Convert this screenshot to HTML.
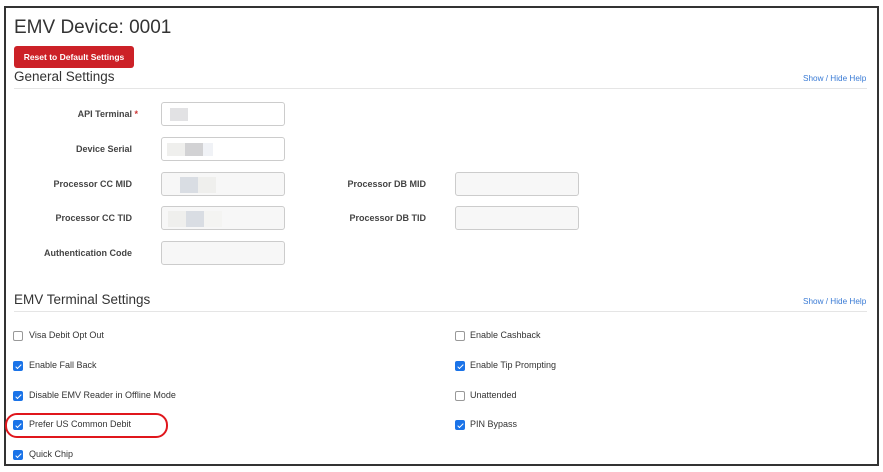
<!DOCTYPE html>
<html><head><style>
body{margin:0;width:883px;height:472px;background:#fff;font-family:"Liberation Sans",Arial,sans-serif;position:relative;overflow:hidden;color:#333}
.frame{position:absolute;left:4px;top:6px;width:871px;height:456px;border:2px solid #333;}
.a{position:absolute;white-space:nowrap}
h1{position:absolute;left:14px;top:17px;margin:0;font-weight:normal;font-size:19px;color:#333}
.btn{position:absolute;left:14px;top:46px;width:120px;height:22px;background:#cc2127;border-radius:3px;color:#fff;font-size:8.5px;font-weight:bold;text-align:center;line-height:22px}
.sec{font-size:13.5px;color:#333}
.hr{position:absolute;left:14px;width:853px;height:1px;background:#e5e5e5}
.help{font-size:8.2px;color:#3a7bd5}
.lbl{font-size:9px;font-weight:bold;color:#444;text-align:right;width:130px}
.inp{position:absolute;width:122px;height:22px;border:1px solid #ccc;border-radius:3px;background:#fff}
.ro{background:#f7f7f7}
.blk{position:absolute;height:13px}
.cb{position:absolute;width:8px;height:8px;border:1px solid #999;border-radius:2px;background:#fff}
.cb.on{background:#1a73e8;border-color:#1a73e8}
.cb.on::after{content:"";position:absolute;left:2.5px;top:0.5px;width:2px;height:5px;border:solid #fff;border-width:0 1.5px 1.5px 0;transform:rotate(45deg)}
.ct{font-size:9px;color:#333}
</style></head><body>
<div class="frame"></div>
<h1>EMV Device: 0001</h1>
<div class="btn">Reset to Default Settings</div>
<div class="a sec" style="left:14px;top:69px">General Settings</div>
<div class="a help" style="left:803px;top:74px">Show / Hide Help</div>
<div class="hr" style="top:88px"></div>

<div class="a lbl" style="left:8px;top:109px">API Terminal <span style="color:#c33">*</span></div>
<div class="inp" style="left:161px;top:102px"><div class="blk" style="left:8px;top:5px;width:18px;background:#e2e2e4"></div></div>
<div class="a lbl" style="left:2px;top:144px">Device Serial</div>
<div class="inp" style="left:161px;top:137px"><div class="blk" style="left:5px;top:5px;width:18px;background:#efefed"></div><div class="blk" style="left:23px;top:5px;width:18px;background:#d2d2d4"></div><div class="blk" style="left:41px;top:5px;width:10px;background:#f0f2f6"></div></div>
<div class="a lbl" style="left:2px;top:179px">Processor CC MID</div>
<div class="inp ro" style="left:161px;top:172px"><div class="blk" style="left:18px;top:4px;width:18px;height:16px;background:#d9dde3"></div><div class="blk" style="left:36px;top:4px;width:18px;height:16px;background:#efefed"></div></div>
<div class="a lbl" style="left:2px;top:213px">Processor CC TID</div>
<div class="inp ro" style="left:161px;top:206px"><div class="blk" style="left:6px;top:4px;width:18px;height:16px;background:#efefed"></div><div class="blk" style="left:24px;top:4px;width:18px;height:16px;background:#d9dde3"></div><div class="blk" style="left:42px;top:4px;width:18px;height:16px;background:#f4f4f2"></div></div>
<div class="a lbl" style="left:2px;top:248px">Authentication Code</div>
<div class="inp ro" style="left:161px;top:241px"></div>
<div class="a lbl" style="left:296px;top:179px">Processor DB MID</div>
<div class="inp ro" style="left:455px;top:172px"></div>
<div class="a lbl" style="left:296px;top:213px">Processor DB TID</div>
<div class="inp ro" style="left:455px;top:206px"></div>

<div class="a sec" style="left:14px;top:292px">EMV Terminal Settings</div>
<div class="a help" style="left:803px;top:297px">Show / Hide Help</div>
<div class="hr" style="top:311px"></div>

<div class="cb" style="left:13px;top:331px"></div><div class="a ct" style="left:29px;top:330px">Visa Debit Opt Out</div>
<div class="cb on" style="left:13px;top:361px"></div><div class="a ct" style="left:29px;top:360px">Enable Fall Back</div>
<div class="cb on" style="left:13px;top:391px"></div><div class="a ct" style="left:29px;top:390px">Disable EMV Reader in Offline Mode</div>
<div class="cb on" style="left:13px;top:420px"></div><div class="a ct" style="left:29px;top:419px">Prefer US Common Debit</div>
<div class="cb on" style="left:13px;top:450px"></div><div class="a ct" style="left:29px;top:449px">Quick Chip</div>
<div class="cb" style="left:455px;top:331px"></div><div class="a ct" style="left:470px;top:330px">Enable Cashback</div>
<div class="cb on" style="left:455px;top:361px"></div><div class="a ct" style="left:470px;top:360px">Enable Tip Prompting</div>
<div class="cb" style="left:455px;top:391px"></div><div class="a ct" style="left:470px;top:390px">Unattended</div>
<div class="cb on" style="left:455px;top:420px"></div><div class="a ct" style="left:470px;top:419px">PIN Bypass</div>

<div class="a" style="left:5px;top:413px;width:159px;height:21px;border:2.5px solid #e0161c;border-radius:12px"></div>
</body></html>
